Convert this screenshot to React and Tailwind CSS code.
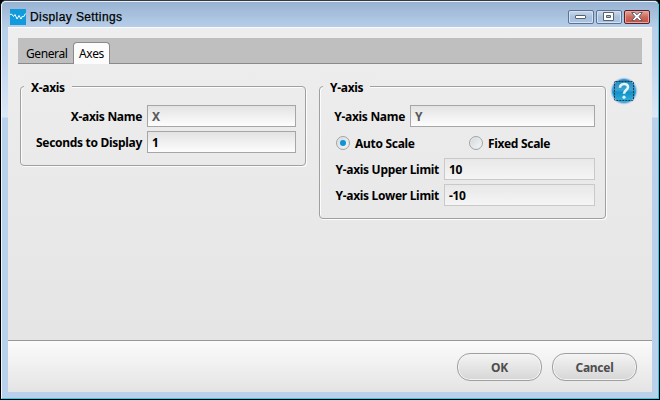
import React from "react";

function WindowButton({ close, children, label }) {
  return (
    <button
      aria-label={label}
      className={
        "flex h-[14px] w-[26px] items-center justify-center rounded-[2px] border " +
        (close
          ? "border-[#5b1e2a] bg-linear-to-b from-[#e6a79b] via-[#cb6a5b] via-50% to-[#c4503f] shadow-[inset_0_0_0_1px_#e3a79f]"
          : "border-[#5d7290] bg-linear-to-b from-[#c9d9ed] via-[#a9c0dc] via-50% to-[#a8c3e3] shadow-[inset_0_0_0_1px_#d3e1f2]")
      }
    >
      {children}
    </button>
  );
}

function Group({ title, className, children }) {
  return (
    <fieldset
      className={
        "rounded-[4px] border border-[#a0a0a0] shadow-[inset_1px_1px_0_#fcfcfc,1px_1px_0_#fcfcfc] " +
        className
      }
    >
      <legend className="ml-[3px] h-[15px] bg-[#ececec] px-[7px] text-[12px] leading-[17px] font-bold tracking-[-0.3px]">
        {title}
      </legend>
      {children}
    </fieldset>
  );
}

function Field({ label, value, gray, disabled, width }) {
  return (
    <label className="flex h-[22px] items-center justify-end">
      <span className="mr-[5px] pt-[2px] whitespace-nowrap">{label}</span>
      <span
        className={
          "flex h-[22px] items-center border pt-[2px] pl-[4px] " +
          width +
          (disabled
            ? " border-[#c9c9c9] bg-linear-to-b from-[#e8e8e8] to-[#f5f5f5]"
            : " border-[#a6a6a6] bg-linear-to-b from-[#e3e3e3] to-[#fdfdfd]") +
          (gray ? " text-[#595959]" : "")
        }
      >
        {value}
      </span>
    </label>
  );
}

function Radio({ checked }) {
  return (
    <span className="flex size-[14px] items-center justify-center rounded-full border border-[#a3a3a3] bg-linear-to-br from-[#cfd5d8] to-[#f7fafb] shadow-[inset_0_0_0_1px_#e6eaec]">
      {checked && <span className="size-[6px] rounded-full bg-[#0d93d6]" />}
    </span>
  );
}

function PillButton({ children }) {
  return (
    <button className="flex h-[28px] w-[85px] items-center justify-center rounded-[13px] border border-[#9f9f9f] bg-linear-to-b from-[#f4f4f4] to-[#d6d6d6] pt-[2px] text-[12px] font-bold tracking-[-0.3px] text-[#4d4d4d] shadow-[inset_0_0_0_1px_#f4f4f4]">
      {children}
    </button>
  );
}

export default function App() {
  return (
    <div className="h-[400px] w-[660px] bg-black font-['Noto_Sans',sans-serif] text-black">
      <div className="flex h-[400px] w-[660px] flex-col rounded-t-[6px] border border-black border-t-[#333a44] bg-[#b9d1ea]">
        <div className="flex h-[398px] flex-col rounded-t-[5px] border border-t-[#e9f1fa] border-r-[#25d1ee] border-b-[#25d1ee] border-l-[#eef5fc] bg-[linear-gradient(#98b3d2_0px,#b7cfe9_26px,#bcd3ec_50px,#dbe8f6_115px,#b9d1ea_116px)] px-[6px] pb-[6px]">
          <header className="flex h-[25px] items-center">
            <svg className="ml-[2px] mt-[5px] size-[16px]" viewBox="0 0 16 16">
              <rect width="16" height="16" fill="#119bdc" />
              <path d="M0 5.5 L1.5 5 L3.5 7.5 L5 5.5 L7 10 L9 6.5 L11 10 L12.5 7 L13.5 8 L15.5 4.5" fill="none" stroke="#fff" />
            </svg>
            <h1 className="mt-[5px] ml-[4px] font-['Liberation_Sans',sans-serif] text-[12px] leading-[16px] tracking-[0.4px] [-webkit-text-stroke:0.25px_#000]">
              Display Settings
            </h1>
            <div className="mt-[5px] mr-[2px] ml-auto flex gap-[2px]">
              <WindowButton label="Minimize">
                <svg width="12" height="6" viewBox="0 0 12 6"><rect x=".5" y="1.5" width="10" height="3" rx=".5" fill="#fff" stroke="#59616d" /></svg>
              </WindowButton>
              <WindowButton label="Maximize">
                <svg width="12" height="10" viewBox="0 0 12 10"><path d="M.5.5h10v8H.5zM3.5 3.5h4v2h-4z" fill="#fff" fillRule="evenodd" stroke="#59616d" /></svg>
              </WindowButton>
              <WindowButton close label="Close">
                <svg width="12" height="10" viewBox="0 0 12 10"><path d="M.7.5h3L6 2.8 8.3.5h3L8 4.7l3.3 3.8h-3L6 6.3 3.7 8.5h-3L4 4.7z" fill="#fff" stroke="#59616d" /></svg>
              </WindowButton>
            </div>
          </header>

          <main className="flex h-[365px] flex-col border-t border-[#fafafa] bg-[#ececec]">
            <section className="flex h-[312px] flex-col bg-linear-to-b from-[#eeeeee] to-[#e5e5e5] px-[10px] pt-[10px]">
              <nav className="flex h-[26px] items-end border-b border-[#8a8a8a] bg-[#bfbfbf] text-[12px] leading-[18px]">
                <span className="ml-[8px] w-[47px] tracking-[-0.4px]">General</span>
                <span className="-mb-px flex h-[22px] w-[37px] items-center justify-center rounded-t-[4px] border border-b-0 border-[#8a8a8a] bg-[#fcfcfc] pt-[1px] tracking-[-0.3px]">
                  Axes
                </span>
              </nav>
              <div className="mt-[15px] ml-[2px] flex items-start text-[12px] leading-[20px] font-bold tracking-[-0.3px]">
                <Group title="X-axis" className="h-[87px] w-[286px]">
                  <div className="mt-[11px] flex flex-col gap-[4px] pr-[9px]">
                    <Field label="X-axis Name" value="X" gray width="w-[149px]" />
                    <Field label="Seconds to Display" value="1" width="w-[149px]" />
                  </div>
                </Group>
                <Group title="Y-axis" className="ml-[13px] h-[140px] w-[287px]">
                  <div className="mt-[11px] flex flex-col gap-[4px] pr-[10px]">
                    <Field label="Y-axis Name" value="Y" gray width="w-[185px]" />
                    <div className="flex h-[23px] items-center pl-[16px]">
                      <Radio checked />
                      <span className="ml-[5px] w-[114px] pt-[2px]">Auto Scale</span>
                      <Radio />
                      <span className="ml-[5px] pt-[2px]">Fixed Scale</span>
                    </div>
                    <Field label="Y-axis Upper Limit" value="10" disabled width="w-[151px]" />
                    <Field label="Y-axis Lower Limit" value="-10" disabled width="w-[151px]" />
                  </div>
                </Group>
                <svg className="ml-[4px] -mt-[2px] size-[28px]" viewBox="0 0 28 28">
                  <defs>
                    <linearGradient id="help" x2="0" y2="1">
                      <stop stopColor="#1f86bd" />
                      <stop offset=".45" stopColor="#3fa6d2" />
                      <stop offset=".55" stopColor="#1390c6" />
                      <stop offset="1" stopColor="#35b4de" />
                    </linearGradient>
                    <radialGradient id="glow">
                      <stop offset=".8" stopColor="#3f8fd6" />
                      <stop offset="1" stopColor="#a8c9e8" stopOpacity="0" />
                    </radialGradient>
                  </defs>
                  <circle cx="14" cy="14" r="14" fill="url(#glow)" />
                  <circle cx="14" cy="14" r="11.5" fill="url(#help)" />
                  <path d="M10 10.8C10 5.8 18 5.8 18 10C18 13 14 13 14 16.8" fill="none" stroke="#e3f4fc" strokeWidth="2.6" />
                  <circle cx="14" cy="20.2" r="1.6" fill="#e3f4fc" />
                  <rect x="4.5" y="4.5" width="19" height="19" rx="1" fill="none" stroke="#19394e" strokeDasharray="2 1" />
                </svg>
              </div>
            </section>
            <footer className="flex h-[52px] justify-end gap-[10px] border-t border-[#989898] bg-linear-to-b from-[#fbfbfb] to-[#e4e4e4] pt-[12px] pr-[15px]">
              <PillButton>OK</PillButton>
              <PillButton>Cancel</PillButton>
            </footer>
          </main>
        </div>
      </div>
    </div>
  );
}
